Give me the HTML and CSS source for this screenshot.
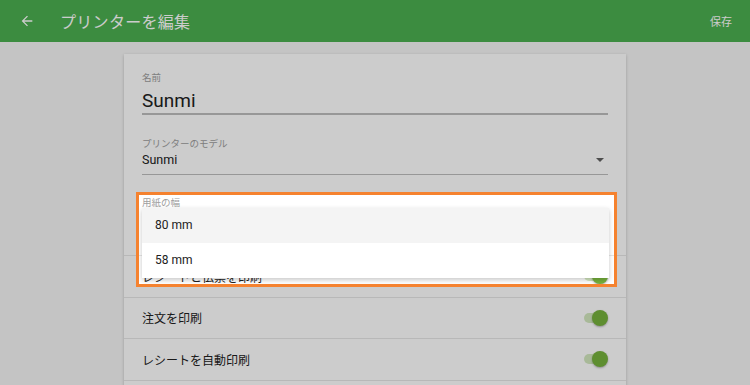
FILE: index.html
```html
<!DOCTYPE html>
<html lang="ja">
<head>
  <meta charset="UTF-8" />
  <meta name="viewport" content="width=device-width, initial-scale=1.0"/>
  <title>プリンターを編集</title>
  <link rel="stylesheet" href="styles.css">
</head>
<body>
  <header class="app-bar">
    <svg class="back" viewBox="0 0 24 24" width="16" height="16"><path d="M20 11H7.83l5.59-5.59L12 4l-8 8 8 8 1.41-1.41L7.83 13H20v-2z" fill="currentColor"/></svg>
    <h1>プリンターを編集</h1>
    <span class="save">保存</span>
  </header>

  <main class="card">
    <div class="field">
      <label>名前</label>
      <div class="value big">Sunmi</div>
    </div>

    <div class="field">
      <label>プリンターのモデル</label>
      <div class="value select">Sunmi<span class="caret"></span></div>
    </div>

    <div class="field paper">
      <label>用紙の幅</label>
      <div class="value select"><span class="hidden">80 mm</span><span class="caret"></span></div>
      <ul class="menu">
        <li class="active">80 mm</li>
        <li>58 mm</li>
      </ul>
    </div>

    <div class="row">
      <span>レシートと伝票を印刷</span>
      <span class="toggle"></span>
    </div>
    <div class="row">
      <span>注文を印刷</span>
      <span class="toggle"></span>
    </div>
    <div class="row">
      <span>レシートを自動印刷</span>
      <span class="toggle"></span>
    </div>
    <div class="row empty"></div>
  </main>

  <div class="spotlight"></div>
</body>
</html>
```

FILE: styles.css
```css
* { margin: 0; padding: 0; box-sizing: border-box; }

html, body {
  width: 100%;
  height: 100%;
  overflow: hidden;
}

body {
  font-family: Roboto, "Noto Sans CJK JP", sans-serif;
  background-color: #f5f5f5;
  color: #212121;
}

.app-bar {
  height: 42px;
  background-color: #4caf50;
  color: #fff;
  display: flex;
  align-items: center;
  padding: 0 18px 0 19px;
}

.back { flex: none; }

.app-bar h1 {
  flex: 1;
  font-size: 16px;
  font-weight: 400;
  margin-left: 25px;
  letter-spacing: 0.3px;
}

.save {
  font-size: 11px;
}

.card {
  width: 502px;
  margin: 12px auto 0;
  background-color: #fff;
  box-shadow: 0 1px 3px rgba(0,0,0,0.2);
}

.field {
  padding: 0 18px;
  position: relative;
}

.field:first-child { padding-top: 17px; }

.field label {
  display: block;
  font-size: 9.5px;
  line-height: 14px;
  color: #9e9e9e;
}

.value {
  border-bottom: 1px solid #bdbdbd;
  color: #212121;
}

.value.big {
  font-size: 19px;
  line-height: 24px;
  padding-top: 4px;
  border-bottom-width: 2px;
  margin-bottom: 22px;
}

.value.select {
  font-size: 12.5px;
  line-height: 16px;
  padding-top: 1px;
  padding-bottom: 6px;
  margin-bottom: 21px;
  display: flex;
  align-items: center;
  justify-content: space-between;
}

.hidden { visibility: hidden; }

.caret {
  width: 0;
  height: 0;
  border-left: 4px solid transparent;
  border-right: 4px solid transparent;
  border-top: 4px solid #616161;
  margin-right: 4px;
}

.paper .value.select {
  margin-bottom: 0;
  padding-top: 8px;
  padding-bottom: 14px;
}

.paper { padding-bottom: 6px; }

.menu {
  list-style: none;
  position: absolute;
  top: 12px;
  left: 18px;
  right: 17px;
  background-color: #fff;
  box-shadow: 0 2px 5px rgba(0,0,0,0.22);
  z-index: 2;
}

.menu li {
  height: 35px;
  line-height: 35px;
  padding-left: 13px;
  font-size: 12px;
}

.menu li.active { background-color: #f4f4f4; }

.row {
  height: 41.5px;
  border-top: 1px solid #e6e6e6;
  display: flex;
  align-items: center;
  justify-content: space-between;
  padding: 0 20px 0 18px;
  font-size: 12px;
}

.toggle {
  position: relative;
  width: 20px;
  height: 10px;
  border-radius: 5px;
  background-color: #d3e8bf;
  margin-right: 2px;
}

.toggle::after {
  content: "";
  position: absolute;
  right: -4px;
  top: -3px;
  width: 16px;
  height: 16px;
  border-radius: 50%;
  background-color: #76b23c;
  box-shadow: 0 1px 2px rgba(0,0,0,0.3);
}

.spotlight {
  position: absolute;
  left: 136px;
  top: 192px;
  width: 481px;
  height: 95px;
  border: 3px solid #f5822f;
  box-shadow: 0 0 0 1200px rgba(0,0,0,0.2);
  z-index: 5;
  pointer-events: none;
}
```
